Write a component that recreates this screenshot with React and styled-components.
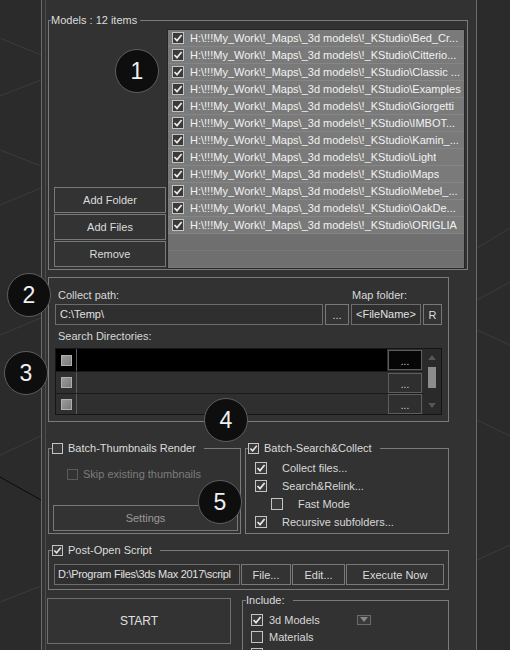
import React from "react";
import styled, { createGlobalStyle } from "styled-components";

const GlobalStyle = createGlobalStyle`
  * { box-sizing: border-box; }
  html, body { margin: 0; padding: 0; background: #2b2b2b; }
  body {
    font-family: "Liberation Sans", Arial, sans-serif;
    font-size: 11px;
    color: #d8d8d8;
  }
`;

const PREFIX = "H:\\!!!My_Work\\!_Maps\\_3d models\\!_KStudio\\";
const models = [
  "Bed_Cr...",
  "Citterio...",
  "Classic ...",
  "Examples",
  "Giorgetti",
  "IMBOT...",
  "Kamin_...",
  "Light",
  "Maps",
  "Mebel_...",
  "OakDe...",
  "ORIGLIA",
];

const badges = [
  { n: 1, x: 137, y: 71 },
  { n: 2, x: 29, y: 295 },
  { n: 3, x: 26, y: 373 },
  { n: 4, x: 226, y: 420 },
  { n: 5, x: 220, y: 502 },
];

// Checkbox
const Check = ({ checked, disabled, size = 11 }) => (
  <CheckBox $size={size} $disabled={disabled}>
    {checked && (
      <svg width={size - 2} height={size - 2} viewBox="0 0 10 10">
        <polyline
          points="1.5,5 4,7.6 8.6,2"
          fill="none"
          stroke="#e8e8e8"
          strokeWidth="1.7"
        />
      </svg>
    )}
  </CheckBox>
);

const App = () => {
  return (
    <Screen>
      <GlobalStyle />
      <Viewport $w={41}>
        <svg width="41" height="650">
          <g stroke="#3c3c3c" strokeWidth="1">
            <line x1="0" y1="38" x2="41" y2="55" />
            <line x1="0" y1="96" x2="41" y2="80" />
            <line x1="0" y1="150" x2="41" y2="166" />
            <line x1="0" y1="205" x2="41" y2="188" />
            <line x1="0" y1="335" x2="41" y2="318" />
            <line x1="0" y1="455" x2="41" y2="436" />
            <line x1="0" y1="602" x2="41" y2="586" />
          </g>
          <line x1="0" y1="477" x2="41" y2="500" stroke="#0c0c0c" />
        </svg>
      </Viewport>

      <Panel>
        <Rollout>
          <Group $w={420} $pad="2px 2px 0 5px">
            <Legend $ml={-3}>Models : 12 items</Legend>
            <ModelsBody>
              <ButtonColumn>
                <Button $w={112} $h={26}>Add Folder</Button>
                <Button $w={112} $h={26}>Add Files</Button>
                <Button $w={112} $h={26}>Remove</Button>
              </ButtonColumn>
              <FileList>
                {models.map((m) => (
                  <FileRow key={m}>
                    <Check checked size={12} />
                    <FileText>{PREFIX + m}</FileText>
                  </FileRow>
                ))}
              </FileList>
            </ModelsBody>
          </Group>

          <Group $w={401} $pad="10px 0 6px 6px" $mt={7}>
            <PathGrid>
              <Label $pl={3}>Collect path:</Label>
              <span />
              <Label $pl={1}>Map folder:</Label>
              <span />
              <Field>C:\Temp\</Field>
              <Button $h={21}>...</Button>
              <Field>&lt;FileName&gt;</Field>
              <Button $h={21}>R</Button>
            </PathGrid>
            <Label $pl={3} $mt={4}>Search Directories:</Label>
            <DirTable>
              <DirRows>
                {[22, 22, 21].map((h, i) => (
                  <DirRow key={i} $h={h} $first={i === 0}>
                    <CheckCell $sel={i === 0}>
                      <GreySquare />
                    </CheckCell>
                    <PathCell $sel={i === 0} />
                    <DotsButton $sel={i === 0}>...</DotsButton>
                  </DirRow>
                ))}
              </DirRows>
              <ScrollBar>
                <svg width="8" height="5" viewBox="0 0 8 5">
                  <polygon points="0,5 4,0 8,5" fill="#555" />
                </svg>
                <Thumb />
                <DownArrow>
                  <svg width="8" height="5" viewBox="0 0 8 5">
                    <polygon points="0,0 8,0 4,5" fill="#555" />
                  </svg>
                </DownArrow>
              </ScrollBar>
            </DirTable>
          </Group>

          <BatchRow>
            <Group $w={193} $pad="12px 2px 1px 4px">
              <Legend $ml={-1} $pr={8}>
                <Check />
                Batch-Thumbnails Render
              </Legend>
              <CheckRow $h={14} $pl={14} $gap={5} $dim>
                <Check disabled />
                Skip existing thumbnails
              </CheckRow>
              <Button $h={26} $mt={24} $dim>
                Settings
              </Button>
            </Group>
            <Group $w={204} $pad="4px 0 2px 9px">
              <Legend $ml={-7} $pr={8}>
                <Check checked />
                Batch-Search&amp;Collect
              </Legend>
              <CheckRow $h={18} $gap={15}>
                <Check checked size={12} />
                Collect files...
              </CheckRow>
              <CheckRow $h={18} $gap={15}>
                <Check checked size={12} />
                Search&amp;Relink...
              </CheckRow>
              <CheckRow $h={18} $pl={16} $gap={15}>
                <Check size={12} />
                Fast Mode
              </CheckRow>
              <CheckRow $h={18} $gap={15}>
                <Check checked size={12} />
                Recursive subfolders...
              </CheckRow>
            </Group>
          </BatchRow>

          <Group $w={401} $pad="7px 4px 4px 5px" $mt={9}>
            <Legend $ml={-2} $pr={8}>
              <Check checked />
              Post-Open Script
            </Legend>
            <ScriptRow>
              <Field $tight>D:\Program Files\3ds Max 2017\scripl</Field>
              <Button $h={21}>File...</Button>
              <Button $h={21}>Edit...</Button>
              <Button $h={21}>Execute Now</Button>
            </ScriptRow>
          </Group>

          <BottomRow>
            <StartButton>START</StartButton>
            <Group $w={207} $pad="4px 0 0 8px">
              <Legend $ml={-5} $pr={8}>Include:</Legend>
              <CheckRow $h={17} $gap={6}>
                <Check checked size={12} />
                <IncludeText>3d Models</IncludeText>
                <DropArrow>
                  <svg width="8" height="5" viewBox="0 0 8 5">
                    <polygon points="0,0 8,0 4,5" fill="#8a8a8a" />
                  </svg>
                </DropArrow>
              </CheckRow>
              <CheckRow $h={17} $gap={6}>
                <Check size={12} />
                Materials
              </CheckRow>
              <CheckRow $h={17} $gap={6}>
                <Check size={12} />
              </CheckRow>
            </Group>
          </BottomRow>
        </Rollout>
      </Panel>

      <Viewport $w={33}>
        <svg width="33" height="650">
          <g stroke="#3c3c3c" strokeWidth="1">
            <line x1="0" y1="248" x2="33" y2="228" />
            <line x1="0" y1="300" x2="33" y2="282" />
            <line x1="0" y1="330" x2="33" y2="345" />
            <line x1="0" y1="420" x2="33" y2="436" />
            <line x1="0" y1="560" x2="33" y2="545" />
          </g>
        </svg>
      </Viewport>

      {badges.map((b) => (
        <Badge key={b.n} $x={b.x} $y={b.y}>
          {b.n}
        </Badge>
      ))}
    </Screen>
  );
};

export default App;

// Styled here

const Screen = styled.div`
  display: flex;
  width: 510px;
  height: 650px;
  overflow: hidden;
  position: relative;
  background: #2b2b2b;
`;

const Viewport = styled.div`
  flex: none;
  width: ${(p) => p.$w}px;
  height: 100%;
  svg {
    display: block;
  }
`;

const Panel = styled.div`
  flex: none;
  width: 436px;
  height: 100%;
  background: #323232;
  border-left: 1px solid #6b6b6b;
  border-right: 1px solid #6b6b6b;
`;

const Rollout = styled.div`
  height: 100%;
  margin-left: 3px;
  border-left: 1px solid #4e4e4e;
  padding: 13px 8px 0 2px;
  display: flex;
  flex-direction: column;
`;

const Group = styled.fieldset`
  flex: none;
  margin: ${(p) => p.$mt || 0}px 0 0 0;
  width: ${(p) => p.$w}px;
  min-width: 0;
  padding: ${(p) => p.$pad};
  border: 1px solid #7b7b7b;
  display: flex;
  flex-direction: column;
`;

const Legend = styled.legend`
  display: flex;
  align-items: center;
  gap: 5px;
  height: 14px;
  line-height: 14px;
  margin-left: ${(p) => p.$ml || 0}px;
  padding: 0 ${(p) => p.$pr || 3}px 0 0;
  color: #dcdcdc;
  white-space: nowrap;
`;

const ModelsBody = styled.div`
  display: flex;
  gap: 1px;
  height: 240px;
`;

const ButtonColumn = styled.div`
  display: flex;
  flex-direction: column;
  justify-content: flex-end;
  gap: 1px;
  padding-bottom: 2px;
`;

const Button = styled.button`
  flex: none;
  width: ${(p) => (p.$w ? `${p.$w}px` : "auto")};
  height: ${(p) => p.$h}px;
  margin-top: ${(p) => p.$mt || 0}px;
  padding: 0;
  background: #333333;
  border: 1px solid #787878;
  color: ${(p) => (p.$dim ? "#9a9a9a" : "#dcdcdc")};
  font-family: "Liberation Sans", Arial, sans-serif;
  font-size: 11px;
  display: flex;
  align-items: center;
  justify-content: center;
  white-space: nowrap;
`;

const FileList = styled.div`
  flex: 1;
  min-width: 0;
  border: 1px solid #262626;
  background: repeating-linear-gradient(
    to bottom,
    #6f6f6f 0px,
    #6f6f6f 16px,
    #787878 16px,
    #787878 17px
  );
  overflow: hidden;
`;

const FileRow = styled.div`
  display: flex;
  align-items: center;
  gap: 6px;
  height: 17px;
  padding-left: 4px;
  background: #7a7a7a;
  border-bottom: 1px solid #858585;
`;

const FileText = styled.span`
  color: #f2f2f2;
  white-space: nowrap;
  overflow: hidden;
`;

const CheckBox = styled.span`
  flex: none;
  width: ${(p) => p.$size}px;
  height: ${(p) => p.$size}px;
  border: 1px solid ${(p) => (p.$disabled ? "#5a5a5a" : "#c4c4c4")};
  background: ${(p) => (p.$disabled ? "#333" : "#3a3a3a")};
  display: flex;
  align-items: center;
  justify-content: center;
`;

const Label = styled.span`
  display: block;
  height: 14px;
  line-height: 14px;
  padding-left: ${(p) => p.$pl || 0}px;
  margin-top: ${(p) => p.$mt || 0}px;
  color: #d8d8d8;
  white-space: nowrap;
`;

const PathGrid = styled.div`
  display: grid;
  grid-template-columns: 268px 24px 70px 19px;
  grid-template-rows: 14px 21px;
  column-gap: 2px;
  row-gap: 2px;
`;

const Field = styled.div`
  height: 21px;
  line-height: 19px;
  padding-left: ${(p) => (p.$tight ? 3 : 4)}px;
  border: 1px solid #6c6c6c;
  background: #2f2f2f;
  color: #e0e0e0;
  letter-spacing: ${(p) => (p.$tight ? "-0.3px" : "normal")};
  white-space: nowrap;
  overflow: hidden;
`;

const DirTable = styled.div`
  display: flex;
  width: 387px;
  height: 67px;
  margin-top: 5px;
  border: 1px solid #151515;
  background: #2f2f2f;
`;

const DirRows = styled.div`
  flex: 1;
  display: flex;
  flex-direction: column;
`;

const DirRow = styled.div`
  display: flex;
  align-items: center;
  height: ${(p) => p.$h}px;
  border-top: ${(p) => (p.$first ? "none" : "1px solid #1b1b1b")};
`;

const CheckCell = styled.div`
  width: 21px;
  height: 100%;
  border-right: 1px solid #5c5c5c;
  background: ${(p) => (p.$sel ? "#000" : "transparent")};
  display: flex;
  align-items: center;
  justify-content: center;
`;

const GreySquare = styled.span`
  width: 11px;
  height: 11px;
  background: linear-gradient(135deg, #9a9a9a, #7a7a7a);
  border: 1px solid #b0b0b0;
`;

const PathCell = styled.div`
  flex: 1;
  height: 100%;
  background: ${(p) => (p.$sel ? "#000" : "transparent")};
`;

const DotsButton = styled.div`
  flex: none;
  width: 34px;
  height: 20px;
  margin: 0 1px;
  border: 1px solid #5e5e5e;
  background: ${(p) => (p.$sel ? "#060606" : "#2f2f2f")};
  color: #d8d8d8;
  font-size: 10px;
  display: flex;
  align-items: flex-end;
  justify-content: center;
  padding-bottom: 3px;
  line-height: 8px;
`;

const ScrollBar = styled.div`
  flex: none;
  width: 18px;
  display: flex;
  flex-direction: column;
  align-items: center;
  padding: 6px 0 6px;
  background: #2a2a2a;
`;

const Thumb = styled.div`
  width: 8px;
  height: 21px;
  margin-top: 7px;
  background: #8c8c8c;
`;

const DownArrow = styled.div`
  margin-top: auto;
  display: flex;
`;

const BatchRow = styled.div`
  display: flex;
  gap: 4px;
  margin-top: 19px;
`;

const CheckRow = styled.div`
  display: flex;
  align-items: center;
  gap: ${(p) => p.$gap}px;
  height: ${(p) => p.$h}px;
  padding-left: ${(p) => p.$pl || 0}px;
  color: ${(p) => (p.$dim ? "#7c7c7c" : "#d8d8d8")};
  white-space: nowrap;
`;

const ScriptRow = styled.div`
  display: grid;
  grid-template-columns: 186px 50px 53px 98px;
  column-gap: 1px;
`;

const BottomRow = styled.div`
  display: flex;
  align-items: flex-start;
  gap: 11px;
  margin-top: 3px;
`;

const StartButton = styled.button`
  flex: none;
  width: 184px;
  height: 46px;
  margin: 5px 0 0 -1px;
  padding: 0;
  background: #333;
  border: 1px solid #6e6e6e;
  color: #e0e0e0;
  font-family: "Liberation Sans", Arial, sans-serif;
  font-size: 12px;
`;

const IncludeText = styled.span`
  width: 82px;
`;

const DropArrow = styled.span`
  width: 14px;
  height: 10px;
  border: 1px solid #6a6a6a;
  background: #3a3a3a;
  display: flex;
  align-items: center;
  justify-content: center;
`;

const Badge = styled.div`
  position: absolute;
  left: ${(p) => p.$x - 22}px;
  top: ${(p) => p.$y - 22}px;
  width: 44px;
  height: 44px;
  border-radius: 50%;
  background: #0e0e0e;
  border: 1px solid #5e5e5e;
  color: #f0f0f0;
  font-size: 23px;
  display: flex;
  align-items: center;
  justify-content: center;
`;
